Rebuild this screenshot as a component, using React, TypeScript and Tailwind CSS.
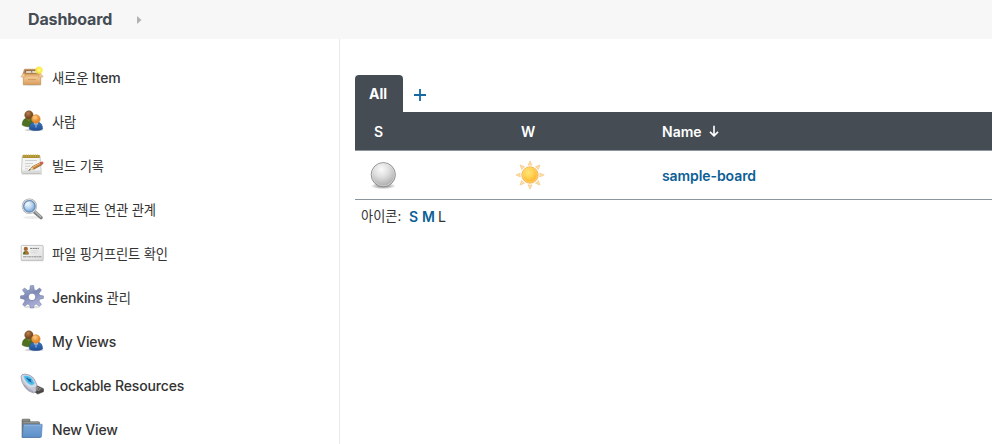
import React from "react";

const BoxIcon = () => (
  <svg width="24" height="24" viewBox="0 0 24 24">
    <defs>
      <linearGradient id="boxFront" x1="0" y1="0" x2="0" y2="1">
        <stop offset="0" stopColor="#d9a263" /><stop offset=".35" stopColor="#f0c691" /><stop offset="1" stopColor="#d89c5f" />
      </linearGradient>
      <radialGradient id="boxGlow"><stop offset="0" stopColor="#fffbc0" /><stop offset=".4" stopColor="#fff04a" /><stop offset=".75" stopColor="#f9e83c" stopOpacity=".8" /><stop offset="1" stopColor="#fff36a" stopOpacity="0" /></radialGradient>
    </defs>
    <ellipse cx="12" cy="20" rx="9.5" ry="1" fill="#000" opacity=".12" />
    <path d="M4.5 4.2h14l2 4.8H2.9z" fill="#c18a51" stroke="#a8703c" strokeWidth=".5" />
    <path d="M5.3 5.2h12.8l1 3.3H4.5z" fill="#8b6747" />
    <path d="M6.3 5.9h4.8l.5 2.1H5.7zM12.1 5.9h4.3l.7 2.1h-4.8z" fill="#ded5c6" />
    <path d="M3.3 8.8h17.4v10.8H3.3z" fill="url(#boxFront)" stroke="#bd8143" strokeWidth=".6" />
    <path d="M3.2 8.6.7 11.8q.8.7 4.4.4l-.4-3.6zM20.7 8.6l2.5 3.2q-.8.7-4.5.4l.7-3.6z" fill="#f0c998" stroke="#c89058" strokeWidth=".4" />
    <path d="M8 14.2h8v.9H8z" fill="#d09459" />
    <circle cx="19" cy="5.2" r="4.4" fill="url(#boxGlow)" />
  </svg>
);

const PeopleIcon = ({ id }: { id: string }) => (
  <svg width="24" height="24" viewBox="0 0 24 24">
    <defs>
      <radialGradient id={id + "Back"} cx=".4" cy=".3"><stop offset="0" stopColor="#b98250" /><stop offset="1" stopColor="#7b4b22" /></radialGradient>
      <radialGradient id={id + "Front"} cx=".4" cy=".3"><stop offset="0" stopColor="#ffd08a" /><stop offset="1" stopColor="#e58c2c" /></radialGradient>
      <linearGradient id={id + "Suit"} x1="0" y1="0" x2="0" y2="1"><stop offset="0" stopColor="#3d76bb" /><stop offset="1" stopColor="#1f4d94" /></linearGradient>
    </defs>
    <ellipse cx="14" cy="21" rx="9.5" ry="1.2" fill="#000" opacity=".2" />
    <path d="M2.2 16c0-4 1.5-6.3 4.5-7h4c3.2.8 4.7 3.3 4.7 7-3.3 2.4-10 2.4-13.2 0z" fill="#4f7021" stroke="#3d5719" strokeWidth=".5" />
    <path d="M6.4 9.5h4.5l-2 3z" fill="#718c43" />
    <circle cx="8.9" cy="6" r="4.2" fill={`url(#${id}Back)`} stroke="#76481f" strokeWidth=".5" />
    <path d="M9.2 20c0-3.9 1.5-6.1 4.1-6.9h5.2c2.7.9 4.1 3.1 4.1 6.9-3.1 2-10 2-13.4 0z" fill={`url(#${id}Suit)`} stroke="#204e91" strokeWidth=".5" />
    <path d="M14 13.8h4l-2 5z" fill="#e8f1fa" /><path d="M15.6 14h.8l.6 3-1 1.9-1-1.9z" fill="#5589c8" />
    <circle cx="15.9" cy="10" r="4.3" fill={`url(#${id}Front)`} stroke="#d17c27" strokeWidth=".5" />
  </svg>
);

const NotepadIcon = () => (
  <svg width="24" height="24" viewBox="0 0 24 24">
    <path d="M1.4 21.5h21l-1-1.5h-19z" fill="#777" opacity=".35" />
    <path d="M2.3 3h17.7l1.2 16q0 1.5-1.5 1.5h-17q-1.4 0-1.3-1.5z" fill="#f4f4f3" stroke="#b5b6b3" strokeWidth=".7" />
    <path d="M1.8 17.5h19v2.5H1.7z" fill="#dadad9" />
    <path d="M2.8 2h16.9v2.9H2.6z" fill="#a98d2d" />
    <path d="M4 1.4v3M6.3 1.4v3M8.6 1.4v3M10.9 1.4v3M13.2 1.4v3M15.5 1.4v3M17.8 1.4v3" stroke="#c4ab4d" />
    <path d="M5 7.5h12M5 10.5h8M5 13.2h5.5M5 15.8h3" stroke="#cfd0d1" />
    <path d="m10.1 16.5 3.7-.3 8.3-4.7-1.1-2.2-8.8 4.5z" fill="#c9883f" stroke="#82501f" strokeWidth=".7" />
    <path d="m12.4 14.3 8-4.2" stroke="#efb971" />
    <path d="m19.6 9.8 1.2 2.2 2.4-1.3q.7-1-.1-1.8-.8-.8-1.7-.2z" fill="#d06050" />
    <path d="m8.2 17.5 4-3.3 1.6 2.2z" fill="#ecd3a4" /><path d="m8 17.7 2-1.6.6 1z" fill="#222" />
  </svg>
);

const SearchIcon = () => (
  <svg width="24" height="24" viewBox="0 0 24 24">
    <defs><radialGradient id="lens" cx=".4" cy=".35"><stop offset="0" stopColor="#edf6fe" /><stop offset=".6" stopColor="#bad6f0" /><stop offset="1" stopColor="#8ab2df" /></radialGradient></defs>
    <ellipse cx="12" cy="20.5" rx="9" ry="1.5" fill="#000" opacity=".08" />
    <path d="m14.5 14.8 6.5 5.7" stroke="#7c7f80" strokeWidth="3.6" strokeLinecap="round" />
    <path d="m15 14.5 5.8 5.2" stroke="#b9bbbc" strokeWidth="1.4" strokeLinecap="round" />
    <circle cx="9.4" cy="9.3" r="6.6" fill="url(#lens)" stroke="#a0a4a7" strokeWidth="2.2" />
    <circle cx="9.4" cy="9.3" r="6.8" fill="none" stroke="#dce0e3" strokeWidth="1" />
    <circle cx="9.4" cy="9.3" r="5.6" fill="none" stroke="#5286be" strokeWidth=".9" />
    <path d="M5.6 9.2q.2-3.8 4.1-4" fill="none" stroke="#fff" strokeWidth="1" opacity=".65" />
  </svg>
);

const CardIcon = () => (
  <svg width="24" height="24" viewBox="0 0 24 24">
    <defs><linearGradient id="card" x1="0" y1="0" x2="1" y2="1"><stop offset="0" stopColor="#fcfcfc" /><stop offset="1" stopColor="#dedede" /></linearGradient></defs>
    <path d="M1 19.7h22.5" stroke="#aaa" strokeWidth=".6" />
    <rect x="1.2" y="4.4" width="22" height="14.8" rx="1" fill="url(#card)" stroke="#b8b8b8" strokeWidth=".8" />
    <circle cx="5.8" cy="7.9" r="2.1" fill="#a0672f" />
    <path d="M3.1 13.5v-1.7q.5-1.7 2.7-1.7t2.8 1.7v1.7z" fill="#4f6b24" /><circle cx="6.8" cy="11.8" r="1.8" fill="#b77331" />
    <path d="M10.2 7.4h8.7" stroke="#666" strokeWidth=".9" strokeDasharray="2 .5" /><path d="M10.5 9.8h8M10.5 11.8h6.2" stroke="#c8c8c8" strokeWidth=".6" />
    <path d="M3 15.8h18.5" stroke="#777" strokeWidth=".8" strokeDasharray="3 .4 1.5 .4" />
  </svg>
);

const GearIcon = () => (
  <svg width="24" height="24" viewBox="0 0 24 24">
    <defs><linearGradient id="gear" x1="0" y1="0" x2=".5" y2="1"><stop offset="0" stopColor="#a9bbd4" /><stop offset=".5" stopColor="#7e8ab5" /><stop offset="1" stopColor="#b0b3dc" /></linearGradient></defs>
    <ellipse cx="12" cy="22" rx="8" ry="1.3" fill="#000" opacity=".12" />
    <path d="m10.4.7 3.2-.1.6 4.2 2 .8 3.4-2.5 1.8 1.9-2.5 3.4.8 1.9 3.7.6v2.5l-3.7.8-.8 1.9 2.5 3.4-1.9 1.8-3.3-2.3-2 .8-.6 3.1h-3.2l-.7-3.1-1.9-.8-3.3 2.3-1.8-1.8L5 16.1l-.8-1.9-3.7-.8v-2.5l3.7-.6L5 8.4 2.5 5l1.9-1.9 3.4 2.5 2-.8z" fill="url(#gear)" stroke="#717ca5" strokeWidth=".6" strokeLinejoin="round" />
    <circle cx="12" cy="11.9" r="3.8" fill="#fff" stroke="#69759f" strokeWidth=".8" />
  </svg>
);

const UsbIcon = () => (
  <svg width="24" height="24" viewBox="0 0 24 24">
    <path d="m14.7 14.4 2.9-1.5 5.9 2.8v3l-5.8 2.4-3.1-2.3z" fill="#4b4947" stroke="#353433" strokeWidth=".5" />
    <path d="m15.5 15 2.3-1.2 4.8 2.5-4.6 1.7z" fill="#918c87" /><path d="m17.7 15.9 1.2-.4.9.5-1.2.5zM20 16.7l1.2-.5.8.4-1.1.4z" fill="#222" />
    <path d="M1 3.8q.3-3 4.2-2.7 5.2.4 8.7 4.3l3.1 6.6q.3 1.6-.9 2.6l.3 3.3-2.8 2.1Q8 18.5 5 14.5 1.2 9.2 1 3.8z" fill="#c4c6d4" stroke="#8c8da2" strokeWidth=".7" />
    <path d="M1.5 3.5q.6-2 3.7-1.8 5 .4 8.1 4.2l3 5.9q-.4 2.1-2.8 2.5-5 .7-8.1-4.1Q2.3 7 1.5 3.5z" fill="#d3dbe3" />
    <path d="M3.6 2.9q5.6-.8 8.6 2.9l2.3 4.4q-1 2.2-3.4 1.9Q5.3 9.6 3.6 2.9z" fill="#4db9eb" stroke="#8bd1ef" strokeWidth=".5" />
    <path d="m6.4 5.1 5.2 4.2M7.7 4.6l.3 2 2-.2M8.3 7.8l2.1.2-.2-2" fill="none" stroke="#125f99" strokeWidth="1" />
    <path d="M4 11.5q3 5.3 9.2 7.2" fill="none" stroke="#858799" strokeWidth=".7" />
  </svg>
);

const FolderIcon = () => (
  <svg width="24" height="24" viewBox="0 0 24 24">
    <defs><linearGradient id="folder" x1="0" y1="0" x2="0" y2="1"><stop offset="0" stopColor="#7ba7d7" /><stop offset="1" stopColor="#5c90c9" /></linearGradient></defs>
    <path d="M2 20.5V3q0-.9 1-.9h6q.9 0 1 1v1.6h8.8q.8 0 .8 1v14.8z" fill="#777a76" stroke="#686a66" strokeWidth=".6" />
    <path d="M3 3h6M3.5 5.7h15.3" stroke="#a0a29f" strokeWidth=".8" />
    <path d="M4 7.3h17.8q.5 0 .4.7l-.8 11.7q-.1.7-.9.7H2.7q-.5 0-.4-.5L3.3 8q0-.7.7-.7z" fill="url(#folder)" stroke="#4677b0" strokeWidth=".6" />
    <path d="M4.2 8.2h17" stroke="#a1c1e3" strokeWidth=".6" />
  </svg>
);

const BallIcon = () => (
  <svg width="32" height="32" viewBox="0 0 32 32">
    <defs>
      <radialGradient id="ball" cx=".42" cy=".28" r=".78"><stop offset="0" stopColor="#fafafa" /><stop offset=".4" stopColor="#dfdfdf" /><stop offset=".85" stopColor="#b1b1b1" /><stop offset="1" stopColor="#cfcfcf" /></radialGradient>
      <radialGradient id="ballShadow"><stop offset="0" stopColor="#333" stopOpacity=".7" /><stop offset="1" stopColor="#333" stopOpacity="0" /></radialGradient>
    </defs>
    <ellipse cx="16.3" cy="27" rx="12.5" ry="3.2" fill="url(#ballShadow)" />
    <circle cx="16.3" cy="15.7" r="12.1" fill="url(#ball)" stroke="#888" strokeWidth=".9" />
    <circle cx="16.3" cy="15.7" r="11.2" fill="none" stroke="#efefef" strokeWidth=".7" opacity=".55" />
  </svg>
);

const SunIcon = () => (
  <svg width="32" height="32" viewBox="0 0 32 32">
    <defs><radialGradient id="sun" cx=".4" cy=".35"><stop offset="0" stopColor="#ffe47d" /><stop offset=".6" stopColor="#ffd250" /><stop offset="1" stopColor="#fdbc3e" /></radialGradient></defs>
    <g fill="#fddfaa" stroke="#f0bc70" strokeWidth=".5">
      {[0, 45, 90, 135, 180, 225, 270, 315].map((a) => (
        <path key={a} d="M14 6.3 16 1.8l2 4.5q-2-.8-4 0z" transform={`rotate(${a} 16 16)`} />
      ))}
    </g>
    <circle cx="16" cy="16" r="8.2" fill="url(#sun)" stroke="#f3a84c" strokeWidth=".8" />
    <circle cx="16" cy="16" r="7.3" fill="none" stroke="#ffdd7a" strokeWidth=".6" />
  </svg>
);

const Ko = ({ children }: { children: React.ReactNode }) => (
  <span className="text-[13.3px] font-normal">{children}</span>
);

const tasks = [
  { key: "new", label: <><Ko>새로운</Ko> Item</>, icon: <BoxIcon /> },
  { key: "people", label: <Ko>사람</Ko>, icon: <PeopleIcon id="people" /> },
  { key: "history", label: <Ko>빌드 기록</Ko>, icon: <NotepadIcon /> },
  { key: "relation", label: <Ko>프로젝트 연관 관계</Ko>, icon: <SearchIcon /> },
  { key: "fingerprint", label: <Ko>파일 핑거프린트 확인</Ko>, icon: <CardIcon /> },
  { key: "manage", label: <>Jenkins <Ko>관리</Ko></>, icon: <GearIcon /> },
  { key: "views", label: "My Views", icon: <PeopleIcon id="views" /> },
  { key: "lockable", label: "Lockable Resources", icon: <UsbIcon /> },
  { key: "newview", label: "New View", icon: <FolderIcon /> },
];

export default function App() {
  return (
    <div className="flex h-[444px] w-[992px] flex-col overflow-hidden bg-white font-[Inter,'Noto_Sans_CJK_KR',sans-serif] text-[14px] text-[#333]">
      <header className="flex h-[39px] shrink-0 items-center bg-[#f7f7f7] pl-7">
        <span className="w-[109px] pb-0.5 text-[16px] font-bold tracking-[-0.12px] text-[#454c54]">Dashboard</span>
        <svg width="5" height="8" viewBox="0 0 5 8"><path d="M0 0v8l4.5-4z" fill="#b2b2b2" /></svg>
      </header>
      <div className="flex min-h-0 flex-1">
        <nav className="w-[340px] shrink-0 border-r border-[#eaeaea] pt-4 pl-5">
          {tasks.map((t) => (
            <a key={t.key} className="flex h-11 items-center gap-2 whitespace-nowrap font-medium tracking-[-0.15px]">
              <span className="shrink-0">{t.icon}</span>
              <span className="pt-px">{t.label}</span>
            </a>
          ))}
        </nav>
        <main className="flex-1 pt-9 pl-[15px]">
          <div className="flex h-[37px] items-center">
            <div className="flex h-full w-12 items-center justify-center rounded-t-[4px] bg-[#454c54] pr-0.5 font-bold text-white">All</div>
            <svg className="mt-[3px] ml-[11px]" width="12" height="12" viewBox="0 0 12 12"><path d="M6 0v12M0 6h12" stroke="#1668a1" strokeWidth="1.8" /></svg>
          </div>
          <div className="flex h-[39px] items-center border-b border-[#8b969f] bg-[#454c54] font-semibold text-white">
            <span className="w-[147px] pl-[19px]">S</span>
            <span className="w-40 pl-[19px]">W</span>
            <span className="flex items-center gap-[7px]">
              Name
              <svg width="10" height="12" viewBox="0 0 10 12"><path d="M5 .8v10M1 6.9l4 4 4-4" fill="none" stroke="white" strokeWidth="1.6" /></svg>
            </span>
          </div>
          <div className="flex h-[49px] items-center border-b border-[#8b969f] font-semibold text-[#0b6096]">
            <span className="w-[147px] pl-3"><BallIcon /></span>
            <span className="w-40 pl-3"><SunIcon /></span>
            <span className="tracking-[-0.08px]">sample-board</span>
          </div>
          <div className="flex h-[34px] items-center pl-1.5">
            <span className="w-12 text-[13.2px]">아이콘:</span>
            <span className="w-[13px] pb-px font-semibold text-[#0b6096]">S</span>
            <span className="w-4 pb-px font-semibold text-[#0b6096]">M</span>
            <span className="pb-px">L</span>
          </div>
        </main>
      </div>
    </div>
  );
}
